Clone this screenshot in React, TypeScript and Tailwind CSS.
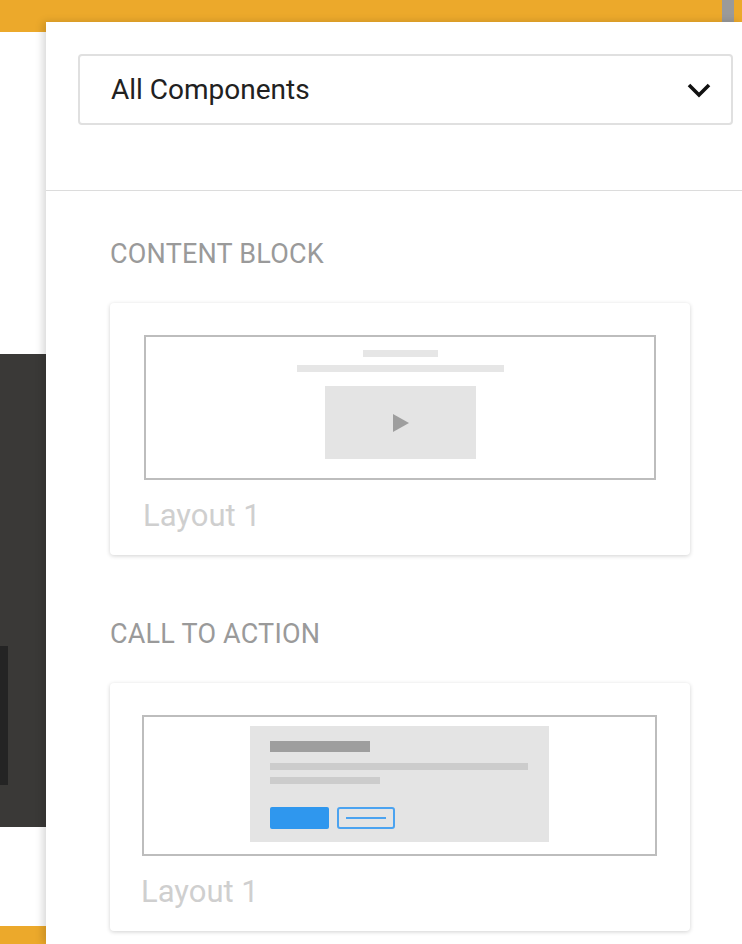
import React from 'react';

const font = { fontFamily: 'Roboto, "Liberation Sans", sans-serif' };

const SectionTitle: React.FC<{ label: string }> = ({ label }) => (
  <h3 className="text-[27px] leading-[30px] tracking-[0.2px] text-[#9a9a9a] uppercase">{label}</h3>
);

const ContentBlockPreview = () => (
  <div className="h-[145px] border-2 border-[#bdbdbd] flex flex-col items-center pt-[13px]">
    <div className="w-[75px] h-[7px] bg-[#e6e6e6]" />
    <div className="w-[207px] h-[7px] bg-[#e6e6e6] mt-[8px]" />
    <div className="w-[151px] h-[73px] bg-[#e4e4e4] mt-[14px] flex items-center justify-center">
      <svg width="20" height="20" viewBox="0 0 20 20">
        <polygon points="3,1 19,10 3,19" fill="#9e9e9e" />
      </svg>
    </div>
  </div>
);

const CallToActionPreview = () => (
  <div className="h-[141px] border-2 border-[#bdbdbd] flex justify-center pt-[9px]">
    <div className="w-[299px] h-[116px] bg-[#e4e4e4] pl-[20px] pt-[15px]">
      <div className="w-[100px] h-[11px] bg-[#9e9e9e]" />
      <div className="w-[258px] h-[7px] bg-[#cccccc] mt-[11px]" />
      <div className="w-[110px] h-[7px] bg-[#cccccc] mt-[7px]" />
      <div className="flex gap-[8px] mt-[23px]">
        <div className="w-[59px] h-[22px] bg-[#2f97ee] rounded-[2px]" />
        <div className="w-[58px] h-[22px] border-2 border-[#4ba3f0] rounded-[3px] flex items-center justify-center">
          <div className="w-[40px] h-[2px] bg-[#4ba3f0]" />
        </div>
      </div>
    </div>
  </div>
);

const LayoutCard: React.FC<{ children: React.ReactNode; pad: string }> = ({ children, pad }) => (
  <div className={`w-[580px] bg-white rounded-[4px] shadow-[0_1px_4px_rgba(0,0,0,0.18)] pt-[32px] pb-[22px] ${pad}`}>
    {children}
    <div className="text-[31px] leading-[34px] text-[#cfcfcf] mt-[19px] -ml-px">Layout 1</div>
  </div>
);

export default function App() {
  return (
    <div className="relative w-[742px] h-[944px] overflow-hidden bg-white" style={font}>
      {/* page underneath the drawer */}
      <div className="flex flex-col h-full">
        <div className="h-[32px] bg-[#eca92b] flex justify-end shrink-0">
          <div className="w-[12px] h-[22px] bg-[#9a9a9a] mr-[8px]" />
        </div>
        <div className="h-[322px] shrink-0" />
        <div className="h-[473px] bg-[#3a3937] shrink-0 pt-[292px]">
          <div className="w-[8px] h-[139px] bg-[#242424]" />
        </div>
        <div className="flex-1" />
        <div className="h-[18px] bg-[#eca92b] shrink-0" />
      </div>

      {/* component drawer */}
      <div className="absolute left-[46px] top-[22px] right-0 bottom-0 bg-white shadow-[-3px_0_8px_rgba(0,0,0,0.16)]">
        <div className="h-[169px] pt-[32px] pl-[32px] pr-[9px] border-b border-[#dcdcdc]">
          <div className="h-[71px] border-2 border-[#e0e0e0] rounded-[4px] flex items-center justify-between pl-[31px] pr-[20px]">
            <span className="text-[28px] text-[#212121]">All Components</span>
            <svg width="24" height="16" viewBox="0 0 24 16">
              <polyline points="2,3 12,13 22,3" fill="none" stroke="#111" strokeWidth="3.6" />
            </svg>
          </div>
        </div>

        <div className="pl-[64px] pt-[48px]">
          <SectionTitle label="Content Block" />
          <div className="mt-[34px]">
            <LayoutCard pad="pl-[34px] pr-[34px]">
              <ContentBlockPreview />
            </LayoutCard>
          </div>

          <div className="mt-[64px]">
            <SectionTitle label="Call to Action" />
          </div>
          <div className="mt-[34px]">
            <LayoutCard pad="pl-[32px] pr-[33px]">
              <CallToActionPreview />
            </LayoutCard>
          </div>
        </div>
      </div>
    </div>
  );
}
